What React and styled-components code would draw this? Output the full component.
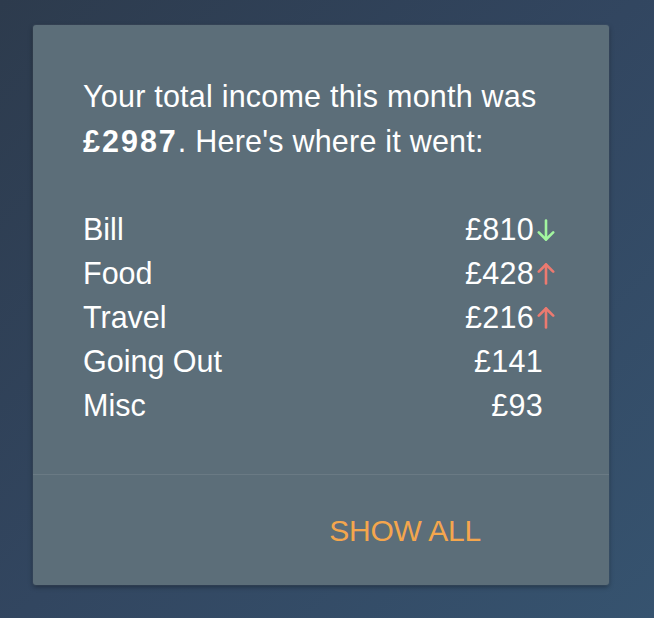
import React from "react";
import styled, { createGlobalStyle } from "styled-components";

const Global = createGlobalStyle`
  html, body { margin: 0; padding: 0; }
  body {
    width: 654px;
    height: 618px;
    overflow: hidden;
    background: linear-gradient(135deg, #2d3b4d 0%, #324660 50%, #36536f 100%);
    font-family: "Liberation Sans", Arial, sans-serif;
  }
`;

const Page = styled.div`
  padding: 25px 0 0 33px;
`;

const Card = styled.section`
  width: 576px;
  height: 560px;
  box-sizing: border-box;
  background: #5c6e79;
  border-radius: 3px;
  box-shadow: 0 0 0 1px rgba(255, 255, 255, 0.04), 0 2px 5px rgba(0, 0, 0, 0.35);
  display: flex;
  flex-direction: column;
  color: #ffffff;
`;

const Content = styled.div`
  padding: 49px 54px 46px 50px;
  border-bottom: 1px solid #6a7a84;
`;

const Summary = styled.p`
  margin: 0 0 43px;
  font-size: 30.5px;
  line-height: 45px;
  letter-spacing: 0.22px;
  font-weight: 400;
`;

const Strong = styled.strong`
  font-weight: 700;
  letter-spacing: 2px;
`;

const List = styled.ul`
  list-style: none;
  margin: 0;
  padding: 0;
`;

const Row = styled.li`
  display: flex;
  justify-content: space-between;
  align-items: center;
  height: 44.2px;
  font-size: 30.5px;
`;

const Label = styled.span``;

const Amount = styled.span`
  display: inline-flex;
  align-items: center;
  gap: 3px;
  letter-spacing: 0.3px;
  padding-right: ${(p) => (p.$trend ? "0" : "12px")};
`;

const Footer = styled.div`
  flex: 1;
  display: flex;
  align-items: center;
  justify-content: flex-end;
  padding-right: 128px;
`;

const ShowAll = styled.button`
  background: none;
  border: none;
  padding: 0;
  margin-top: 3px;
  font-family: "Liberation Sans", Arial, sans-serif;
  font-size: 30px;
  color: #f4a64d;
  letter-spacing: -0.2px;
  cursor: pointer;
`;

const ArrowSvg = styled.svg`
  display: block;
  width: 18px;
  height: 22px;
  margin-top: 1px;
`;

function Arrow({ dir }) {
  const color = dir === "down" ? "#a2f59f" : "#ec7a70";
  return (
    <ArrowSvg viewBox="0 0 18 22" fill="none" stroke={color} strokeWidth="2.6" strokeLinecap="round" strokeLinejoin="round">
      {dir === "down" ? (
        <>
          <path d="M9 1.5V20.5" />
          <path d="M1.8 13.3L9 20.5L16.2 13.3" />
        </>
      ) : (
        <>
          <path d="M9 20.5V1.5" />
          <path d="M1.8 8.7L9 1.5L16.2 8.7" />
        </>
      )}
    </ArrowSvg>
  );
}

const items = [
  { label: "Bill", amount: "£810", trend: "down" },
  { label: "Food", amount: "£428", trend: "up" },
  { label: "Travel", amount: "£216", trend: "up" },
  { label: "Going Out", amount: "£141" },
  { label: "Misc", amount: "£93" },
];

export default function App() {
  return (
    <>
      <Global />
      <Page>
        <Card>
          <Content>
            <Summary>
              Your total income this month was <Strong>£2987</Strong>. Here's where it went:
            </Summary>
            <List>
              {items.map((it) => (
                <Row key={it.label}>
                  <Label>{it.label}</Label>
                  <Amount $trend={it.trend}>
                    {it.amount}
                    {it.trend && <Arrow dir={it.trend} />}
                  </Amount>
                </Row>
              ))}
            </List>
          </Content>
          <Footer>
            <ShowAll>SHOW ALL</ShowAll>
          </Footer>
        </Card>
      </Page>
    </>
  );
}
